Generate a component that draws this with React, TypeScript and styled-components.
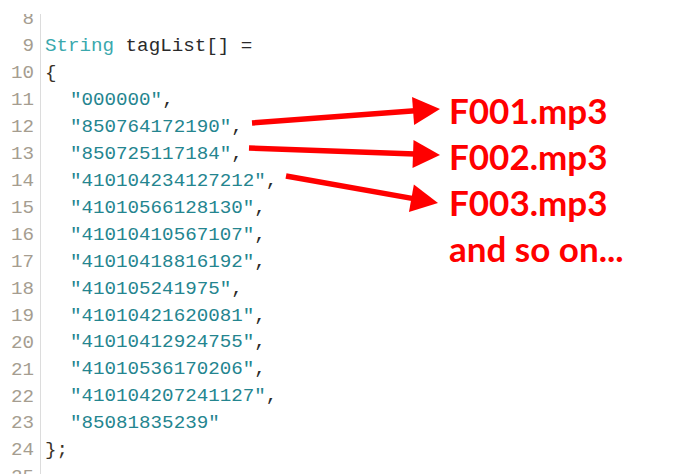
import React from "react";
import styled, { createGlobalStyle } from "styled-components";

const Global = createGlobalStyle`
  html, body { margin: 0; padding: 0; background: #ffffff; }
  body { width: 700px; height: 474px; overflow: hidden; }
`;

const LINE = 26.93;

const Page = styled.div`
  position: relative;
  width: 700px;
  height: 474px;
  overflow: hidden;
  background: #ffffff;
  display: grid;
  grid-template-columns: 449px 1fr;
  padding-top: 14px;
  box-sizing: border-box;
`;

const Editor = styled.div`
  display: flex;
  overflow: hidden;
  height: 460px;
`;

const Gutter = styled.div`
  width: 41px;
  box-sizing: border-box;
  border-right: 1px solid #dcdcdc;
  padding-right: 6px;
  text-align: right;
`;

const Code = styled.div`
  flex: 1;
  padding-left: 4px;
`;

const Lines = styled.div`
  margin-top: -7.6px;
  font-family: "Liberation Mono", "Courier New", monospace;
  font-size: 19.2px;
  line-height: ${LINE}px;
  white-space: pre;
`;

const Num = styled.div`
  color: #a59d90;
`;

const Line = styled.div<{ $indent?: boolean }>`
  color: #3a3226;
  padding-left: ${(p) => (p.$indent ? "25px" : "0")};
  height: ${LINE}px;
`;

const Keyword = styled.span`
  color: #3aa8ad;
`;

const Plain = styled.span`
  color: #2a2a2a;
`;

const Str = styled.span`
  color: #24858f;
`;

const Notes = styled.div`
  padding-top: 72.5px;
  display: flex;
  flex-direction: column;
  font-family: Lato, "Open Sans", sans-serif;
  font-weight: 700;
  font-size: 35px;
  line-height: 46px;
  color: #ff0000;
`;

const Note = styled.div`
  white-space: nowrap;
`;

const Overlay = styled.svg`
  position: absolute;
  left: 0;
  top: 0;
  pointer-events: none;
`;

type P = { x: number; y: number };

function Arrow({ from, to }: { from: P; to: P }) {
  const dx = to.x - from.x;
  const dy = to.y - from.y;
  const len = Math.hypot(dx, dy);
  const ux = dx / len;
  const uy = dy / len;
  const nx = -uy;
  const ny = ux;
  const headLen = 27;
  const half = 14;
  const bx = to.x - ux * headLen;
  const by = to.y - uy * headLen;
  const pts = [
    `${to.x},${to.y}`,
    `${bx + nx * half},${by + ny * half}`,
    `${bx - nx * half},${by - ny * half}`,
  ].join(" ");
  return (
    <g fill="#ff0000" stroke="#ff0000">
      <line x1={from.x} y1={from.y} x2={bx + ux * 2} y2={by + uy * 2} strokeWidth={5.5} />
      <polygon points={pts} strokeWidth={0} />
    </g>
  );
}

const tags = [
  "000000",
  "850764172190",
  "850725117184",
  "410104234127212",
  "41010566128130",
  "41010410567107",
  "41010418816192",
  "410105241975",
  "41010421620081",
  "41010412924755",
  "41010536170206",
  "410104207241127",
  "85081835239",
];

export default function App() {
  const numbers = Array.from({ length: 18 }, (_, i) => i + 8);
  return (
    <>
      <Global />
      <Page>
        <Editor>
          <Gutter>
            <Lines>
              {numbers.map((n) => (
                <Num key={n}>{n}</Num>
              ))}
            </Lines>
          </Gutter>
          <Code>
            <Lines>
              <Line> </Line>
              <Line>
                <Keyword>String</Keyword> <Plain>tagList[] =</Plain>
              </Line>
              <Line>{"{"}</Line>
              {tags.map((t, i) => (
                <Line $indent key={t}>
                  <Str>"{t}"</Str>
                  <Plain>{i < tags.length - 1 ? "," : ""}</Plain>
                </Line>
              ))}
              <Line>{"};"}</Line>
              <Line> </Line>
            </Lines>
          </Code>
        </Editor>
        <Notes>
          <Note>F001.mp3</Note>
          <Note>F002.mp3</Note>
          <Note>F003.mp3</Note>
          <Note>and so on...</Note>
        </Notes>
        <Overlay width={700} height={474} viewBox="0 0 700 474">
          <Arrow from={{ x: 252, y: 123 }} to={{ x: 440, y: 109 }} />
          <Arrow from={{ x: 249, y: 148 }} to={{ x: 440, y: 155 }} />
          <Arrow from={{ x: 286, y: 176 }} to={{ x: 438, y: 203 }} />
        </Overlay>
      </Page>
    </>
  );
}
